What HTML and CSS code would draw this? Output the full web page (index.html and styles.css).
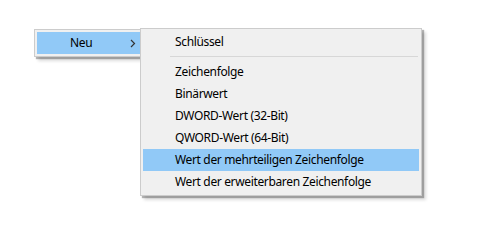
FILE: index.html
```html
<!DOCTYPE html>
<html lang="de">
<head>
<meta charset="utf-8">
<title>Kontextmenü</title>
<link rel="stylesheet" href="styles.css">
</head>
<body>
<div class="stage">
  <div class="menu main-menu">
    <div class="item active">
      <span class="label">Neu</span>
      <svg class="chev" width="6" height="9" viewBox="0 0 6 9"><polyline points="1,1 4.5,4.5 1,8" fill="none" stroke="#333" stroke-width="1.2"/></svg>
    </div>
  </div>
  <div class="menu sub-menu">
    <div class="item">Schlüssel</div>
    <div class="sep"></div>
    <div class="item">Zeichenfolge</div>
    <div class="item">Binärwert</div>
    <div class="item">DWORD-Wert (32-Bit)</div>
    <div class="item">QWORD-Wert (64-Bit)</div>
    <div class="item hover">Wert der mehrteiligen Zeichenfolge</div>
    <div class="item">Wert der erweiterbaren Zeichenfolge</div>
  </div>
</div>
</body>
</html>
```
FILE: styles.css
```css
html, body {
  margin: 0;
  padding: 0;
  background: #ffffff;
}
body {
  width: 499px;
  height: 242px;
  overflow: hidden;
  font-family: "Noto Sans", "Segoe UI", sans-serif;
  font-size: 12px;
  letter-spacing: -0.35px;
  color: #000;
}
.stage {
  display: flex;
  align-items: flex-start;
  padding: 28px 0 0 34px;
}
.menu {
  background: #f0f0f0;
  border: 1px solid #cccccc;
  padding: 2px;
  box-shadow: 2px 2px 1px rgba(0,0,0,0.28), 4px 4px 3px rgba(0,0,0,0.14);
}
.main-menu {
  margin-top: 1px;
  width: 110px;
}
.sub-menu {
  position: relative;
  z-index: 1;
  margin-left: -10px;
  width: 276px;
}
.item {
  height: 22px;
  line-height: 22px;
  padding-left: 32px;
  white-space: nowrap;
}
.main-menu .item {
  display: flex;
  align-items: center;
  padding-left: 33px;
}
.main-menu .label {
  flex: 1;
}
.chev {
  display: block;
  margin-right: 11px;
}
.active, .hover {
  background: #91c9f7;
}
.sep {
  height: 1px;
  background: #d7d7d7;
  margin: 3px 1px 4px 27px;
}
```
